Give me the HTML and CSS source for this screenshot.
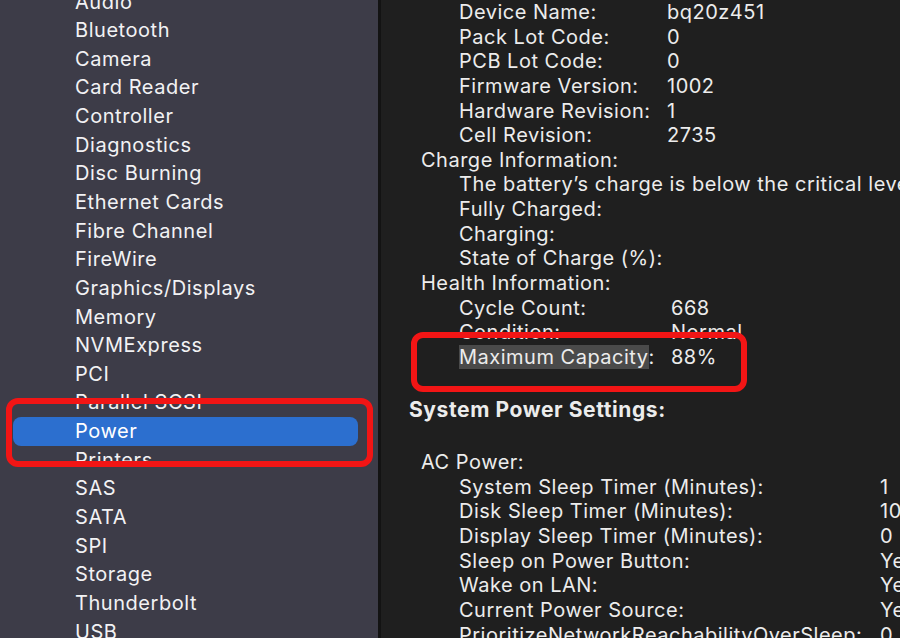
FILE: index.html
```html
<!DOCTYPE html>
<html>
<head>
<meta charset="utf-8">
<link rel="stylesheet" href="styles.css">
</head>
<body>
<div class="window">
  <aside class="sidebar">
    <ul class="nav">
      <li>Audio</li>
      <li>Bluetooth</li>
      <li>Camera</li>
      <li>Card Reader</li>
      <li>Controller</li>
      <li>Diagnostics</li>
      <li>Disc Burning</li>
      <li>Ethernet Cards</li>
      <li>Fibre Channel</li>
      <li>FireWire</li>
      <li>Graphics/Displays</li>
      <li>Memory</li>
      <li>NVMExpress</li>
      <li>PCI</li>
      <li>Parallel SCSI</li>
      <li class="selected">Power</li>
      <li>Printers</li>
      <li>SAS</li>
      <li>SATA</li>
      <li>SPI</li>
      <li>Storage</li>
      <li>Thunderbolt</li>
      <li>USB</li>
    </ul>
    <div class="mark mark-power"></div>
  </aside>
  <main class="detail">
    <div class="block">
      <div class="row l2 battery"><span class="k">Device Name:</span><span class="v">bq20z451</span></div>
      <div class="row l2 battery"><span class="k">Pack Lot Code:</span><span class="v">0</span></div>
      <div class="row l2 battery"><span class="k">PCB Lot Code:</span><span class="v">0</span></div>
      <div class="row l2 battery"><span class="k">Firmware Version:</span><span class="v">1002</span></div>
      <div class="row l2 battery"><span class="k">Hardware Revision:</span><span class="v">1</span></div>
      <div class="row l2 battery"><span class="k">Cell Revision:</span><span class="v">2735</span></div>
      <div class="row l1">Charge Information:</div>
      <div class="row l2">The battery’s charge is below the critical level.</div>
      <div class="row l2"><span class="k">Fully Charged:</span></div>
      <div class="row l2"><span class="k">Charging:</span></div>
      <div class="row l2"><span class="k">State of Charge (%):</span></div>
      <div class="row l1">Health Information:</div>
      <div class="row l2 health"><span class="k">Cycle Count:</span><span class="v">668</span></div>
      <div class="row l2 health"><span class="k">Condition:</span><span class="v">Normal</span></div>
      <div class="row l2 health"><span class="k"><span class="hl">Maximum Capacity</span>:</span><span class="v">88%</span></div>
    </div>
    <div class="row heading">System Power Settings:</div>
    <div class="row l1 ac">AC Power:</div>
    <div class="row l2 power"><span class="k">System Sleep Timer (Minutes):</span><span class="v">1</span></div>
    <div class="row l2 power"><span class="k">Disk Sleep Timer (Minutes):</span><span class="v">10</span></div>
    <div class="row l2 power"><span class="k">Display Sleep Timer (Minutes):</span><span class="v">0</span></div>
    <div class="row l2 power"><span class="k">Sleep on Power Button:</span><span class="v">Yes</span></div>
    <div class="row l2 power"><span class="k">Wake on LAN:</span><span class="v">Yes</span></div>
    <div class="row l2 power"><span class="k">Current Power Source:</span><span class="v">Yes</span></div>
    <div class="row l2 power"><span class="k">PrioritizeNetworkReachabilityOverSleep:</span><span class="v">0</span></div>
    <div class="mark mark-capacity"></div>
  </main>
</div>
</body>
</html>
```
FILE: styles.css
```css
* { box-sizing: border-box; }
html, body {
  margin: 0;
  padding: 0;
  width: 900px;
  height: 638px;
  overflow: hidden;
  background: #1f1f1f;
  font-family: Inter, "Noto Sans", "Liberation Sans", sans-serif;
}
.window {
  display: flex;
  width: 900px;
  height: 638px;
}
.sidebar {
  position: relative;
  width: 381px;
  flex: none;
  background: #3d3c48;
  border-right: 3px solid #131313;
  overflow: hidden;
}
.nav {
  list-style: none;
  margin: -12.5px 0 0 0;
  padding: 0 20px 0 13px;
}
.nav li {
  height: 28.65px;
  line-height: 28.65px;
  padding-left: 62px;
  font-size: 20px;
  letter-spacing: 0.55px;
  color: #f2f2f4;
  border-radius: 8px;
  white-space: nowrap;
}
.nav li.selected {
  background: #2c6fcf;
  color: #ffffff;
}
.mark {
  position: absolute;
  border: 6px solid #f21515;
  border-radius: 12px;
  pointer-events: none;
}
.mark-power {
  left: 6px;
  top: 398px;
  width: 367px;
  height: 69px;
}
.detail {
  position: relative;
  flex: 1;
  background: #1f1f1f;
  overflow: hidden;
  color: #ececec;
  font-size: 20px;
  letter-spacing: 0.5px;
}
.row {
  display: flex;
  height: 24.64px;
  line-height: 24.64px;
  white-space: nowrap;
}
.l1 { padding-left: 40px; }
.l2 { padding-left: 78px; }
.heading {
  padding-left: 28px;
  font-weight: 700;
  font-size: 21px;
  letter-spacing: 0.6px;
  margin-top: 28.4px;
}
.ac { margin-top: 27.8px; }
.k { flex: none; }
.battery .k { width: 208px; }
.health .k { width: 212px; }
.power .k { width: 421px; }
.hl {
  background: #4a4a4a;
}
.mark-capacity {
  left: 30px;
  top: 332px;
  width: 336px;
  height: 60px;
}
```
